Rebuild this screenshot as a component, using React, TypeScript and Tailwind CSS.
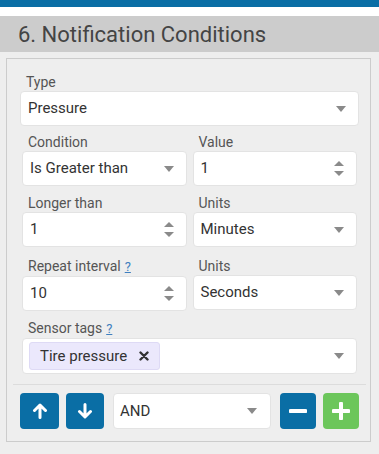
import React from 'react'

const Caret = () => (
  <svg width="10" height="6" viewBox="0 0 10 6" className="ml-auto shrink-0">
    <polygon points="0,0 10,0 5,6" fill="#8a8a8a" />
  </svg>
)

const Spinner = () => (
  <svg width="10" height="15" viewBox="0 0 10 15" className="ml-auto shrink-0">
    <polygon points="5,0 10,5 0,5" fill="#8a8a8a" />
    <polygon points="0,10 10,10 5,15" fill="#8a8a8a" />
  </svg>
)

const Help = () => <span className="ml-[4px] text-[13px] text-[#3f7fbf] underline">?</span>

function Label({ children }: { children: React.ReactNode }) {
  return <div className="pl-[6px] text-[14px] leading-[16px] text-[#555] mb-[1px] whitespace-nowrap">{children}</div>
}

function Box({ value, kind }: { value: string; kind: 'select' | 'number' }) {
  return (
    <div className="h-[35px] bg-white border border-[#e3e3e3] rounded-[4px] flex items-center pl-[7px] pr-[12px] text-[15px] text-[#333]">
      <span>{value}</span>
      {kind === 'select' ? <Caret /> : <Spinner />}
    </div>
  )
}

export default function App() {
  return (
    <div className="w-[379px] h-[454px] bg-[#eeeeee] font-['Roboto',sans-serif] overflow-hidden">
      <div className="h-[7px] bg-[#0a6ea5]" />
      <div className="h-[9px] bg-white" />
      <div className="h-[36px] bg-[#cccccc] pl-[18px] flex items-center text-[22px] text-[#444]">
        6. Notification Conditions
      </div>

      <div className="pt-[6px] pl-[6px] pr-[8px]">
        <div className="border border-[#cccccc] h-[384px] pt-[15px]">
          {/* Type */}
          <div className="ml-[13px] mr-[11px]">
            <Label>Type</Label>
            <Box value="Pressure" kind="select" />
          </div>

          {/* Condition / Value */}
          <div className="ml-[15px] mr-[13px] mt-[8px] flex gap-[6px]">
            <div className="flex-1">
              <Label>Condition</Label>
              <Box value="Is Greater than" kind="select" />
            </div>
            <div className="flex-1">
              <Label>Value</Label>
              <Box value="1" kind="number" />
            </div>
          </div>

          {/* Longer than / Units */}
          <div className="ml-[15px] mr-[13px] mt-[9px] flex gap-[6px]">
            <div className="flex-1">
              <Label>Longer than</Label>
              <Box value="1" kind="number" />
            </div>
            <div className="flex-1">
              <Label>Units</Label>
              <Box value="Minutes" kind="select" />
            </div>
          </div>

          {/* Repeat interval / Units */}
          <div className="ml-[15px] mr-[13px] mt-[11px] flex gap-[6px]">
            <div className="flex-1">
              <Label>
                Repeat interval<Help />
              </Label>
              <Box value="10" kind="number" />
            </div>
            <div className="flex-1">
              <Label>Units</Label>
              <Box value="Seconds" kind="select" />
            </div>
          </div>

          {/* Sensor tags */}
          <div className="ml-[15px] mr-[13px] mt-[9px]">
            <Label>
              Sensor tags<Help />
            </Label>
            <div className="h-[36px] bg-white border border-[#e3e3e3] rounded-[4px] flex items-center pl-[6px] pr-[12px]">
              <div className="h-[28px] bg-[#ebe8fc] border border-[#dedaf5] rounded-[3px] flex items-center pl-[10px] pr-[10px] text-[15px] text-[#333]">
                Tire pressure
                <svg width="10" height="10" viewBox="0 0 10 10" className="ml-[12px]">
                  <path d="M1.5 1.5L8.5 8.5M8.5 1.5L1.5 8.5" stroke="#333" strokeWidth="2.4" strokeLinecap="round" />
                </svg>
              </div>
              <Caret />
            </div>
          </div>

          <div className="mt-[10px] ml-[6px] mr-[4px] h-px bg-[#dcdcdc]" />

          {/* Actions */}
          <div className="mt-[8px] ml-[13px] mr-[11px] flex items-center h-[36px]">
            <button className="w-[39px] h-[36px] rounded-[4px] bg-[#0a6ea5] flex items-center justify-center">
              <svg width="16" height="16" viewBox="0 0 16 16">
                <path d="M8 14.5V2.5M2.5 7.5L8 2l5.5 5.5" stroke="white" strokeWidth="3" strokeLinecap="round" strokeLinejoin="round" fill="none" />
              </svg>
            </button>
            <button className="ml-[7px] w-[38px] h-[36px] rounded-[4px] bg-[#0a6ea5] flex items-center justify-center">
              <svg width="16" height="16" viewBox="0 0 16 16">
                <path d="M8 1.5V13.5M2.5 8.5L8 14l5.5-5.5" stroke="white" strokeWidth="3" strokeLinecap="round" strokeLinejoin="round" fill="none" />
              </svg>
            </button>
            <div className="ml-[9px] flex-1 h-[36px] bg-white border border-[#e3e3e3] rounded-[4px] flex items-center pl-[6px] pr-[13px] text-[15px] text-[#333]">
              AND
              <Caret />
            </div>
            <button className="ml-[9px] w-[36px] h-[36px] rounded-[4px] bg-[#0a6ea5] flex items-center justify-center">
              <svg width="18" height="18" viewBox="0 0 18 18">
                <path d="M1.5 9H16.5" stroke="white" strokeWidth="4" strokeLinecap="round" />
              </svg>
            </button>
            <button className="ml-[7px] w-[36px] h-[36px] rounded-[4px] bg-[#6cc65b] flex items-center justify-center">
              <svg width="18" height="18" viewBox="0 0 18 18">
                <path d="M1.5 9H16.5M9 1.5V16.5" stroke="white" strokeWidth="4" strokeLinecap="round" />
              </svg>
            </button>
          </div>
        </div>
      </div>
    </div>
  )
}
